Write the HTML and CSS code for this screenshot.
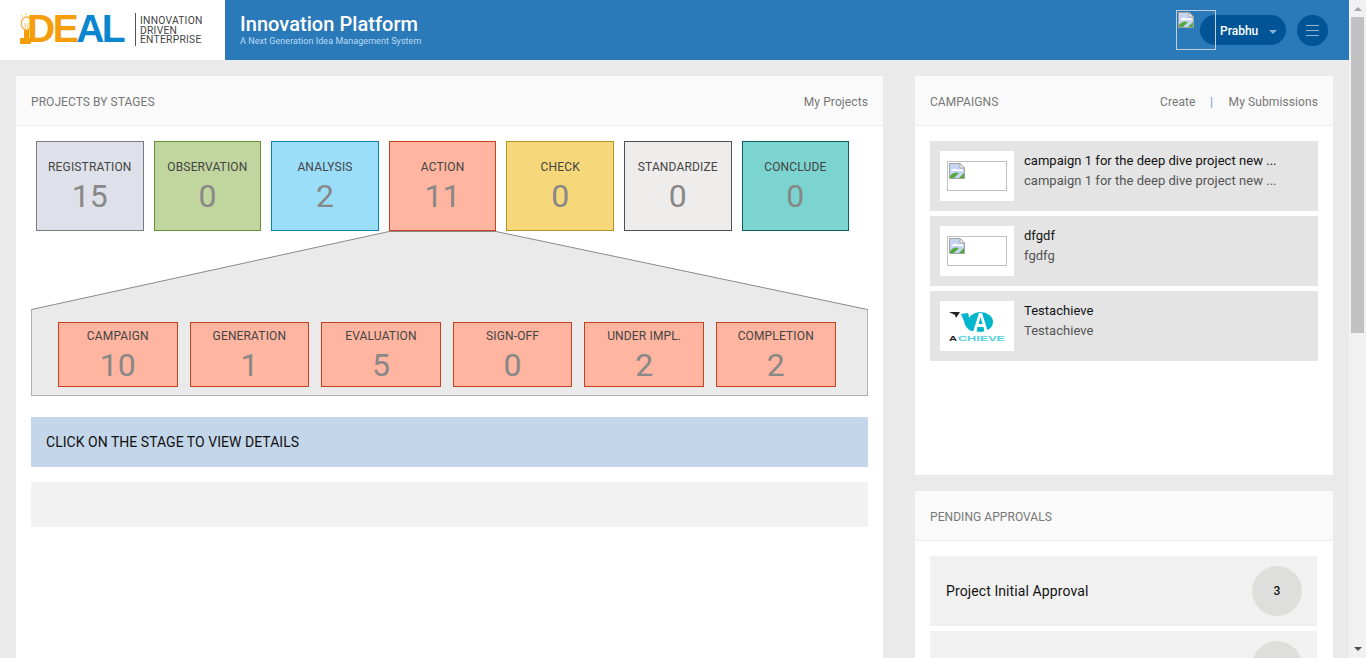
FILE: index.html
```html
<!DOCTYPE html>
<html lang="en">
<head>
    <meta charset="UTF-8">
    <title>Innovation Platform</title>
    <link rel="stylesheet" href="styles.css">
</head>
<body>
<div class="page">
    <!-- Top bar -->
    <header class="topbar">
        <div class="brand">
            <svg class="idea-bulb" width="13" height="31" viewBox="0 0 13 31">
                <path d="M1 2 L2.5 3.5 M6 0 V2 M11 2 L9.5 3.5" stroke="#f9c36b" fill="none"/>
                <ellipse cx="6.5" cy="10.5" rx="5.2" ry="6.5" fill="#fff" stroke="#f7b451" stroke-width="1.4"/>
                <path d="M5 10 L5.5 18 M8 10 L7.5 18" stroke="#f9c36b" fill="none"/>
                <rect x="4" y="17" width="5" height="9" fill="#f59e0b"/>
                <rect x="0" y="25" width="11" height="6" fill="#f59e0b"/>
            </svg>
            <span class="logo-word"><span class="logo-de">DE</span><span class="logo-al">AL</span></span>
            <div class="logo-tag">INNOVATION<br>DRIVEN<br>ENTERPRISE</div>
        </div>
        <div class="bar-title">
            <h1>Innovation Platform</h1>
            <p>A Next Generation Idea Management System</p>
        </div>
        <div class="bar-user">
            <div class="user-pill">
                <span>Prabhu</span>
                <i class="caret"></i>
            </div>
            <div class="user-photo">
                <svg class="broken" width="16" height="16" viewBox="0 0 16 16"><use href="#broken-img"/></svg>
            </div>
            <div class="menu-btn"><i></i><i></i><i></i></div>
        </div>
    </header>

    <div class="columns">
        <!-- Projects by stages -->
        <section class="panel panel-main">
            <div class="panel-head">
                <h2>PROJECTS BY STAGES</h2>
                <div class="head-links"><a>My Projects</a></div>
            </div>
            <div class="panel-body">
                <div class="stages">
                    <div class="stage s-grey"><span>REGISTRATION</span><b>15</b></div>
                    <div class="stage s-green"><span>OBSERVATION</span><b>0</b></div>
                    <div class="stage s-blue"><span>ANALYSIS</span><b>2</b></div>
                    <div class="stage s-red"><span>ACTION</span><b>11</b></div>
                    <div class="stage s-yellow"><span>CHECK</span><b>0</b></div>
                    <div class="stage s-light"><span>STANDARDIZE</span><b>0</b></div>
                    <div class="stage s-teal"><span>CONCLUDE</span><b>0</b></div>
                </div>
                <div class="drill">
                    <svg class="drill-roof" width="837" height="79" viewBox="0 0 837 79">
                        <path d="M0.5 79 V78.5 L358 0.5 H465 L836.5 78.5 V79" fill="#eaeaea" stroke="#8a8a8a"/>
                    </svg>
                    <div class="substages">
                        <div class="stage sub s-red"><span>CAMPAIGN</span><b>10</b></div>
                        <div class="stage sub s-red"><span>GENERATION</span><b>1</b></div>
                        <div class="stage sub s-red"><span>EVALUATION</span><b>5</b></div>
                        <div class="stage sub s-red"><span>SIGN-OFF</span><b>0</b></div>
                        <div class="stage sub s-red"><span>UNDER IMPL.</span><b>2</b></div>
                        <div class="stage sub s-red"><span>COMPLETION</span><b>2</b></div>
                    </div>
                </div>
                <div class="hint">CLICK ON THE STAGE TO VIEW DETAILS</div>
                <div class="empty-row"></div>
            </div>
        </section>

        <div class="side">
            <!-- Campaigns -->
            <section class="panel panel-campaigns">
                <div class="panel-head">
                    <h2>CAMPAIGNS</h2>
                    <div class="head-links"><a>Create</a><em>|</em><a>My Submissions</a></div>
                </div>
                <div class="panel-body campaign-list">
                    <div class="campaign">
                        <div class="thumb"><div class="no-img"><svg class="broken" width="16" height="16" viewBox="0 0 16 16"><use href="#broken-img"/></svg></div></div>
                        <div class="campaign-text"><strong>campaign 1 for the deep dive project new ...</strong><span>campaign 1 for the deep dive project new ...</span></div>
                    </div>
                    <div class="campaign">
                        <div class="thumb"><div class="no-img"><svg class="broken" width="16" height="16" viewBox="0 0 16 16"><use href="#broken-img"/></svg></div></div>
                        <div class="campaign-text"><strong>dfgdf</strong><span>fgdfg</span></div>
                    </div>
                    <div class="campaign">
                        <div class="thumb">
                            <svg width="60" height="34" viewBox="0 0 60 34">
                                <path d="M2 3 H13 L9 9 L8 6 Z" fill="#222"/>
                                <path d="M14 5 L21 4 L23 12 Q24 19 31 23 Q19 23 17 12 Z" fill="#00b5cc"/>
                                <ellipse cx="33.5" cy="13" rx="12.5" ry="10" fill="#00b5cc"/>
                                <path d="M26 23 L32 4 H35 L41 23 H37.5 L36.5 18 H30.5 L29.5 23 Z M31.5 15 H35.5 L33.5 8 Z" fill="#fff"/>
                                <text class="ach-a" x="2" y="32" textLength="8" lengthAdjust="spacingAndGlyphs">A</text>
                                <text class="ach-rest" x="11" y="32" textLength="47" lengthAdjust="spacingAndGlyphs">CHIEVE</text>
                            </svg>
                        </div>
                        <div class="campaign-text"><strong>Testachieve</strong><span>Testachieve</span></div>
                    </div>
                </div>
            </section>

            <!-- Pending approvals -->
            <section class="panel panel-pending">
                <div class="panel-head"><h2>PENDING APPROVALS</h2></div>
                <div class="panel-body approval-list">
                    <div class="approval"><span>Project Initial Approval</span><b>3</b></div>
                    <div class="approval"><span></span><b></b></div>
                </div>
            </section>
        </div>
    </div>
</div>

<!-- Page scrollbar -->
<div class="scrollbar">
    <i class="arrow-up"></i>
    <div class="thumb-bar"></div>
    <i class="arrow-down"></i>
</div>

<svg width="0" height="0" class="defs">
    <symbol id="broken-img" viewBox="0 0 16 16">
        <path d="M0.5 0.5 H11 L15.5 5 V15.5 H0.5 Z" fill="#c5d5f2" stroke="#a3a3a3"/>
        <path d="M11 0.5 V5 H15.5 Z" fill="#fff" stroke="#a3a3a3"/>
        <path d="M2 8 Q5 4 9 7 L12 6 L14 7 V8 Z" fill="#fff"/>
        <path d="M1 15 V13 Q5 8 10 10 L5 15 Z" fill="#55a83c"/>
        <path d="M15 15 H10 L15 10 Z" fill="#55a83c"/>
    </symbol>
</svg>
</body>
</html>
```

FILE: styles.css
```css
/* Base */
html, body {
    margin: 0;
    padding: 0;
    height: 658px;
    overflow: hidden;
}

body {
    font-family: Roboto, "Liberation Sans", sans-serif;
    background-color: #eaeaea;
    color: #333;
}

.page {
    width: 1349px;
    height: 658px;
    overflow: hidden;
}

.defs {
    display: block;
    height: 0;
}

/* Top bar */
.topbar {
    display: flex;
    height: 60px;
    background-color: #2a79b9;
}

.brand {
    display: flex;
    align-items: center;
    width: 225px;
    height: 60px;
    padding-left: 20px;
    box-sizing: border-box;
    background-color: #fff;
}

.idea-bulb {
    flex: none;
    margin-top: -3px;
}

.logo-word {
    flex: none;
    width: 108px;
    margin-left: -6px;
    margin-top: -3px;
    font-family: "Liberation Sans", sans-serif;
    font-weight: bold;
    font-size: 39px;
    line-height: 30px;
    letter-spacing: -2.5px;
}

.logo-de { color: #f59e0b; }
.logo-al { color: #0a86ce; }

.logo-tag {
    flex: none;
    height: 33px;
    margin-top: -1px;
    padding-left: 4px;
    padding-top: 3px;
    box-sizing: border-box;
    border-left: 1px solid #555;
    font-size: 10.3px;
    line-height: 9.5px;
    color: #444;
    letter-spacing: 0.25px;
    white-space: nowrap;
}

.bar-title {
    flex: 1;
    padding: 13px 0 0 15px;
    color: #fff;
}

.bar-title h1 {
    margin: 0;
    font-size: 20px;
    font-weight: 500;
    line-height: 23px;
    letter-spacing: 0.05px;
}

.bar-title p {
    margin: 0;
    font-size: 9px;
    line-height: 10px;
    letter-spacing: 0.05px;
    color: #bcdcf4;
}

.bar-user {
    display: flex;
    align-items: center;
    position: relative;
    padding-right: 21px;
}

.user-pill {
    display: flex;
    align-items: center;
    width: 86px;
    height: 30px;
    padding: 2px 0 0 20px;
    box-sizing: border-box;
    border-radius: 15px;
    background-color: #015496;
    color: #fff;
    font-size: 12px;
    font-weight: 500;
}

.caret {
    margin-left: 11px;
    margin-top: 1px;
    border-left: 4px solid transparent;
    border-right: 4px solid transparent;
    border-top: 4px solid #8fb3d3;
}

.user-photo {
    position: absolute;
    left: -24px;
    top: 10px;
    width: 36px;
    height: 36px;
    padding: 1px;
    border: 1px solid #c4ced6;
}

.broken {
    display: block;
}

.menu-btn {
    display: flex;
    flex-direction: column;
    align-items: center;
    justify-content: center;
    gap: 4px;
    width: 31px;
    height: 31px;
    margin-left: 11px;
    border-radius: 50%;
    background-color: #015496;
}

.menu-btn i {
    display: block;
    width: 13px;
    height: 1px;
    background-color: #8fb3d3;
}

/* Columns */
.columns {
    display: flex;
    padding: 16px 16px 0 16px;
    gap: 32px;
    align-items: flex-start;
}

.panel {
    background-color: #fff;
}

.panel-main {
    width: 867px;
    height: 640px;
    flex: none;
}

.side {
    display: flex;
    flex-direction: column;
    gap: 16px;
    width: 418px;
    flex: none;
}

.panel-head {
    display: flex;
    align-items: center;
    justify-content: space-between;
    height: 47px;
    padding: 2px 15px 0;
    background-color: #fafafa;
    border-bottom: 1px solid #ececec;
}

.panel-head h2 {
    margin: 0;
    font-size: 12px;
    font-weight: 400;
    letter-spacing: 0.06px;
    color: #777;
}

.head-links {
    display: flex;
    font-size: 12px;
    letter-spacing: 0.1px;
    color: #777;
}

.head-links em {
    font-style: normal;
    margin: 0 15.5px 0 14.5px;
    color: #6f9fc8;
}

/* Stages */
.panel-main .panel-body {
    padding: 15px;
}

.stages {
    display: flex;
    gap: 10px;
    padding-left: 5px;
}

.stage {
    display: flex;
    flex-direction: column;
    align-items: center;
    box-sizing: border-box;
    width: 107.6px;
    height: 90px;
    padding-top: 18px;
    border: 1px solid #777;
    font-size: 12px;
    letter-spacing: 0.15px;
    color: #444;
    white-space: nowrap;
}

.stage span {
    line-height: 14px;
}

.stage b {
    font-size: 32px;
    font-weight: 400;
    line-height: 36px;
    margin-top: 4px;
    letter-spacing: 0;
    color: #888;
}

.s-grey { background-color: #dee1e9; border-color: #7b7b7b; }
.s-green { background-color: #c1d59f; border-color: #659233; }
.s-blue { background-color: #9bdefa; border-color: #0a83b5; }
.s-red { background-color: #ffb5a0; border-color: #c4401f; }
.s-yellow { background-color: #f6d779; border-color: #b1932a; }
.s-light { background-color: #eeedeb; border-color: #50505a; }
.s-teal { background-color: #7bd4cf; border-color: #0c615f; }

/* Drill down */
.drill {
    display: flex;
    flex-direction: column;
}

.drill-roof {
    display: block;
}

.substages {
    display: flex;
    gap: 12px;
    padding: 12px 0 8px 26px;
    background-color: #eaeaea;
    border: 1px solid #b0b0b0;
    border-top: 0;
}

.stage.sub {
    width: 119.6px;
    height: 65px;
    padding-top: 6px;
}

.hint {
    margin-top: 21px;
    height: 50px;
    line-height: 50px;
    padding-left: 15px;
    background-color: #c4d7ea;
    color: #111;
    font-size: 14px;
    letter-spacing: 0.03px;
}

.empty-row {
    margin-top: 15px;
    height: 45px;
    background-color: #f2f2f2;
}

/* Campaigns */
.panel-campaigns {
    height: 399px;
}

.campaign-list {
    display: flex;
    flex-direction: column;
    gap: 5px;
    padding: 15px 15px 0;
}

.campaign {
    display: flex;
    height: 70px;
    padding: 10px;
    box-sizing: border-box;
    background-color: #e4e4e4;
}

.thumb {
    display: flex;
    align-items: center;
    justify-content: center;
    width: 74px;
    height: 50px;
    background-color: #fff;
    flex: none;
}

.no-img {
    width: 60px;
    height: 30px;
    box-sizing: border-box;
    border: 1px solid #c0c0c0;
    padding: 1px;
}

.campaign-text {
    display: flex;
    flex-direction: column;
    padding-left: 10px;
    font-size: 13px;
    line-height: 20px;
    letter-spacing: 0.03px;
}

.campaign-text strong {
    font-weight: 400;
    color: #111;
}

.campaign-text span {
    color: #555;
}

.ach-a {
    font-family: "Liberation Sans", sans-serif;
    font-weight: bold;
    font-size: 8px;
    fill: #222;
}

.ach-rest {
    font-family: "Liberation Sans", sans-serif;
    font-weight: bold;
    font-size: 8px;
    fill: #54cfe0;
}

/* Pending approvals */
.approval-list {
    display: flex;
    flex-direction: column;
    gap: 5px;
    padding: 15px 16px 0 15px;
}

.approval {
    display: flex;
    align-items: center;
    justify-content: space-between;
    height: 70px;
    padding: 0 15px 0 16px;
    background-color: #f1f1f1;
    font-size: 14px;
    letter-spacing: 0.1px;
    color: #111;
}

.approval b {
    display: flex;
    align-items: center;
    justify-content: center;
    width: 50px;
    height: 50px;
    border-radius: 50%;
    background-color: #dededc;
    font-size: 12px;
    font-weight: 500;
}

/* Scrollbar */
.scrollbar {
    position: fixed;
    top: 0;
    right: 0;
    width: 17px;
    height: 658px;
    background-color: #f1f1f1;
}

.thumb-bar {
    position: absolute;
    top: 17px;
    left: 2px;
    width: 13px;
    height: 316px;
    background-color: #c1c1c1;
}

.arrow-up, .arrow-down {
    position: absolute;
    left: 5px;
    border-left: 4px solid transparent;
    border-right: 4px solid transparent;
}

.arrow-up {
    top: 7px;
    border-bottom: 4px solid #a3a3a3;
}

.arrow-down {
    bottom: 7px;
    border-top: 4px solid #505050;
}
```
